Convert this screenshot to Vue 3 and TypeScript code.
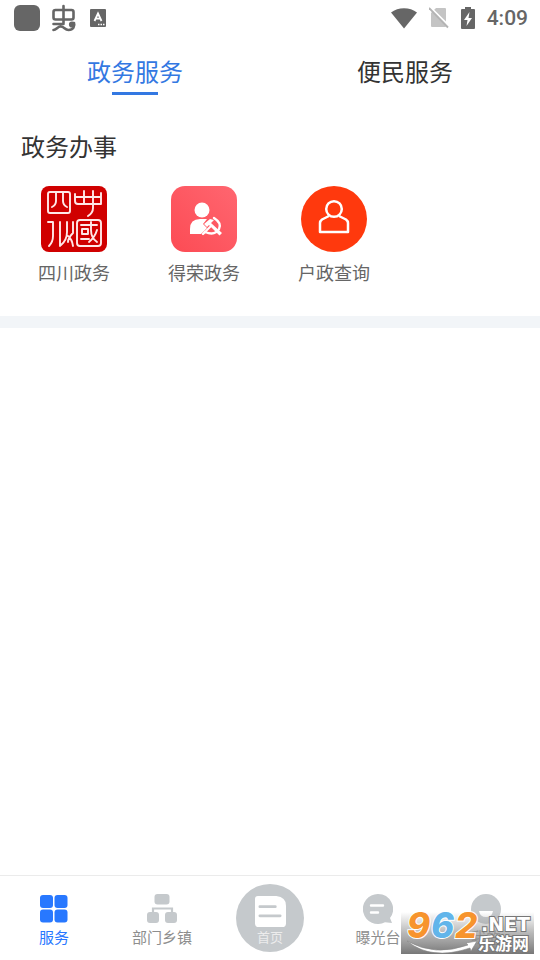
<script setup lang="ts">
import { ref } from 'vue'

type IconName = 'grid' | 'org' | 'doc' | 'chat' | 'me'

interface NavItem {
  icon: IconName
  label: string
}

const tabs: string[] = ['政务服务', '便民服务']
const activeTab = ref(0)

const navItems: NavItem[] = [
  { icon: 'grid', label: '服务' },
  { icon: 'org', label: '部门乡镇' },
  { icon: 'doc', label: '首页' },
  { icon: 'chat', label: '曝光台' },
  { icon: 'me', label: '我的' },
]
const activeNav = ref(0)
</script>

<template>
  <div class="page">
    <header class="status">
      <div class="status-left">
        <svg width="26" height="26" viewBox="0 0 26 26"><rect width="26" height="26" rx="6" fill="#666" /></svg>
        <svg width="26" height="28" viewBox="0 0 26 28" fill="none" stroke="#666" stroke-width="2.600" stroke-linecap="round" stroke-linejoin="round">
          <rect x="1.500" y="6" width="20" height="9.500" rx="2" />
          <path d="M11.500 2v17.500M1.500 20h10M1.500 26c3 0 4-3.500 7-3.500 4 0 4 3.500 8 3.500 5 0 6.500-4 5.500-7" />
          <circle cx="20" cy="20.500" r="1.800" fill="#666" />
        </svg>
        <svg width="16" height="18" viewBox="0 0 16 18">
          <rect width="16" height="18" rx="1" fill="#666" />
          <path d="M4.500 12 8 4.500 11.500 12M5.800 9.700h4.400" fill="none" stroke="#fff" stroke-width="1.800" />
          <path d="M8 15.500h1.500m1 0H12m1 0h1.500" stroke="#fff" stroke-width="1.300" />
        </svg>
      </div>
      <div class="status-right">
        <svg width="26" height="21" viewBox="0 0 26 21"><path d="M0 4.500C7-1.300 19-1.300 26 4.500L13 20.500z" fill="#666" /></svg>
        <svg width="20" height="22" viewBox="0 0 20 22">
          <path d="M2 6 7 1h9q1 0 1 1v17q0 1-1 1H3q-1 0-1-1z" fill="#c4c4c4" />
          <path d="M1 0 20 19" stroke="#fff" stroke-width="2" />
          <path d="M0 1 19 20.500" stroke="#b4b4b4" stroke-width="1.800" />
        </svg>
        <svg width="14" height="22" viewBox="0 0 14 22">
          <path d="M1 2h3V0h6v2h3q1 0 1 1v18q0 1-1 1H1q-1 0-1-1V3q0-1 1-1z" fill="#666" />
          <path d="M8.500 5 3 13h3.500L5.500 19 11 11H7.500z" fill="#fff" />
        </svg>
        <span class="clock">4:09</span>
      </div>
    </header>

    <div class="tabs" role="tablist">
      <button
        v-for="(tab, i) in tabs"
        :key="tab"
        type="button"
        role="tab"
        class="tab"
        :class="{ active: activeTab === i }"
        :aria-selected="activeTab === i"
        @click="activeTab = i"
      >
        {{ tab }}
      </button>
    </div>

    <main class="content">
      <section class="section">
        <h2 class="title">政务办事</h2>
        <div class="services">
          <button type="button" class="service">
            <svg class="service-icon" viewBox="0 0 66 66">
              <rect width="66" height="66" rx="8" fill="#d00000" />
              <g fill="none" stroke="#ffe8e8" stroke-width="1.900" stroke-linejoin="round" stroke-linecap="round">
                <rect x="7" y="6" width="22" height="21" rx="2" />
                <path d="M15 6v9q0 4-4 6M22 6v9q0 4 4 6" />
                <path d="M34 8v7q0 3 3 3h23V11M34 11h26V7M43 5v13M52 5v17q0 5-5 8" />
                <path d="M7 36h5v14q0 6-4 10M19 36v24M26 36v10q0 8-6 13M32 36v11q-5 5-5 9M27 50q4 3 5 10" />
                <rect x="36" y="34" width="24" height="26" rx="3" />
                <path d="M40 39h16M50 36v8q0 8 6 12M41 43h6v5h-6zM40 53h8M56 44q-2 7-8 12" />
              </g>
            </svg>
            <span>四川政务</span>
          </button>
          <button type="button" class="service">
            <svg class="service-icon" viewBox="0 0 66 66">
              <defs>
                <linearGradient id="rose" x1="1" y1="0" x2="0" y2="1">
                  <stop offset="0" stop-color="#ff6670" />
                  <stop offset="1" stop-color="#fc4b54" />
                </linearGradient>
              </defs>
              <rect width="66" height="66" rx="14" fill="url(#rose)" />
              <circle cx="31" cy="24" r="7.500" fill="#fff" />
              <path d="M19 48v-5q0-10 10-10h7l-4 5 4 4-6 6H20q-1 0-1 0z" fill="#fff" />
              <path d="M43 32q8 5 5 11-4 7-14 3l-2 2" fill="none" stroke="#fff" stroke-width="2.400" stroke-linecap="round" />
              <path d="M33 38l6-5 4 1-3 3 11 10-2.500 2.500L38 39l-2 2z" fill="#fff" />
              <path d="M34 46 40 40" stroke="#fff" stroke-width="2" />
            </svg>
            <span>得荣政务</span>
          </button>
          <button type="button" class="service">
            <svg class="service-icon" viewBox="0 0 66 66">
              <circle cx="33" cy="33" r="33" fill="#ff390d" />
              <g fill="none" stroke="#fff" stroke-width="2.500" stroke-linejoin="round">
                <circle cx="33" cy="23" r="7.800" />
                <path d="M28 30 21 33.500Q19 35 19 37v9h28v-9q0-2-2-3.500L38 30" />
              </g>
            </svg>
            <span>户政查询</span>
          </button>
        </div>
      </section>
    </main>

    <nav class="bottom">
      <button
        v-for="(item, i) in navItems"
        :key="item.label"
        type="button"
        class="nav-item"
        :class="{ active: activeNav === i, home: item.icon === 'doc' }"
        @click="activeNav = i"
      >
        <svg v-if="item.icon === 'grid'" class="nav-icon" viewBox="0 0 30 30" fill="currentColor">
          <rect x="1" y="1" width="13" height="13" rx="3" />
          <rect x="15.500" y="1" width="13" height="13" rx="3" />
          <rect x="1" y="15.500" width="13" height="13" rx="3" />
          <rect x="15.500" y="15.500" width="13" height="13" rx="3" />
        </svg>
        <svg v-else-if="item.icon === 'org'" class="nav-icon" viewBox="0 0 30 30" fill="currentColor">
          <rect x="7.500" y="0" width="15" height="10.500" rx="3" />
          <rect x="0" y="18" width="12" height="11" rx="3" />
          <rect x="18" y="18" width="12" height="11" rx="3" />
          <path d="M6 19v-4.500h19V19" fill="none" stroke="currentColor" stroke-width="2.200" />
        </svg>
        <svg v-else-if="item.icon === 'doc'" class="doc-icon" viewBox="0 0 32 32">
          <path d="M3 0h19q10 1 10 10v18q0 4-4 4H4q-4 0-4-4V3q0-3 3-3z" fill="#fff" />
          <path d="M5 11h16M5 20.500h21" stroke="#c5c9cc" stroke-width="2.800" stroke-linecap="round" />
        </svg>
        <svg v-else-if="item.icon === 'chat'" class="nav-icon" viewBox="0 0 30 30">
          <path d="M15 0a15 15 0 1 0 7 28.200L29 29l-2-5A15 15 0 0 0 15 0z" fill="currentColor" />
          <path d="M8 11.500h12M8 18.500h7" stroke="#fff" stroke-width="2.400" stroke-linecap="round" />
        </svg>
        <svg v-else class="nav-icon" viewBox="0 0 30 30">
          <circle cx="15" cy="15" r="15" fill="currentColor" />
          <path d="M8 17h14q-1 6-7 6t-7-6z" fill="#fff" />
        </svg>
        <span class="nav-label">{{ item.label }}</span>
      </button>
    </nav>

    <div class="watermark">
      <svg viewBox="0 0 133 42">
        <defs>
          <linearGradient id="shade" x1="0" y1="0" x2="0" y2="1">
            <stop offset="0" stop-color="#999" stop-opacity="0" />
            <stop offset="0.500" stop-color="#999" stop-opacity="0.700" />
            <stop offset="1" stop-color="#777" />
          </linearGradient>
        </defs>
        <rect width="133" height="42" fill="url(#shade)" />
        <path d="M6 29Q34 45 67 33l-2-2 11-2-6 10-1-3Q30 49 6 29z" fill="#fff" stroke="#888" stroke-width="0.600" />
        <g class="wm-digits">
          <text x="6" y="26" fill="#f7942d">9</text>
          <text x="30" y="26" fill="#62b5ea">6</text>
          <text x="54" y="26" fill="#f7942d">2</text>
        </g>
        <text class="wm-net" x="80" y="19">.NET</text>
        <text class="wm-cjk" x="77" y="38">乐游网</text>
      </svg>
    </div>
  </div>
</template>

<style>
body {
  background: #fff;
}
</style>

<style scoped>
.page {
  display: flex;
  flex-direction: column;
  min-height: 100vh;
  position: relative;
  background: #fff;
  color: #333;
  font-family: Roboto, "Noto Sans CJK SC", sans-serif;
}

button {
  border: 0;
  padding: 0;
  background: none;
  color: inherit;
  font: inherit;
  cursor: pointer;
}

svg {
  display: block;
}

.status {
  display: flex;
  justify-content: space-between;
  height: 36px;
  padding: 0 12px 0 14px;
}

.status-left,
.status-right {
  display: flex;
  align-items: center;
  gap: 12px;
}

.clock {
  color: #666;
  font-size: 21px;
  font-weight: 500;
  line-height: 36px;
}

.tabs {
  display: flex;
  height: 72px;
}

.tab {
  display: flex;
  flex: 1;
  flex-direction: column;
  align-items: center;
  padding-top: 18px;
  font-size: 24px;
  line-height: 38px;
}

.tab::after {
  content: "";
  width: 46px;
  height: 3px;
}

.tab.active {
  color: #3378e2;
}

.tab.active::after {
  background: #3378e2;
}

.content {
  flex: 1;
}

.section {
  padding: 20px 11px 28px 9px;
  border-bottom: 12px solid #f2f5f8;
}

.title {
  margin: 0 12px 18px;
  font-size: 24px;
  font-weight: 400;
  line-height: 40px;
}

.services {
  display: grid;
  grid-template-columns: repeat(4, 1fr);
}

.service {
  display: flex;
  flex-direction: column;
  align-items: center;
  gap: 8px;
  color: #666;
  font-size: 18px;
  line-height: 28px;
}

.service-icon {
  width: 66px;
  height: 66px;
}

.bottom {
  display: flex;
  height: 84px;
  border-top: 1px solid #ebebeb;
}

.nav-item {
  display: flex;
  flex: 1;
  flex-direction: column;
  align-items: center;
  gap: 2px;
  padding-top: 18px;
  color: #c5c9cc;
}

.nav-icon {
  width: 30px;
  height: 30px;
}

.nav-label {
  color: #8e8e8e;
  font-size: 15px;
  line-height: 24px;
}

.nav-item.active,
.nav-item.active .nav-label {
  color: #2878ff;
}

.nav-item.home {
  flex: none;
  width: 68px;
  height: 68px;
  margin: 8px 20px 0;
  padding-top: 12px;
  border-radius: 50%;
  background: #c5c9cc;
}

.home .doc-icon {
  width: 31px;
  height: 31px;
}

.home .nav-label {
  color: #ececec;
  font-size: 13px;
  line-height: 18px;
}

.watermark {
  position: absolute;
  right: 6px;
  bottom: 6px;
  width: 133px;
  pointer-events: none;
}

.watermark svg {
  overflow: visible;
}

.wm-digits {
  font: italic 800 35px Inter, "DejaVu Sans", sans-serif;
  stroke: #fff;
  stroke-width: 2px;
  paint-order: stroke;
}

.wm-net {
  font: bold 19px "DejaVu Sans", sans-serif;
  fill: #fff;
  stroke: #777;
  stroke-width: 2px;
  paint-order: stroke;
}

.wm-cjk {
  font: bold 17px "Noto Sans CJK SC", sans-serif;
  fill: #fff;
  stroke: #777;
  stroke-width: 2px;
  paint-order: stroke;
}
</style>
